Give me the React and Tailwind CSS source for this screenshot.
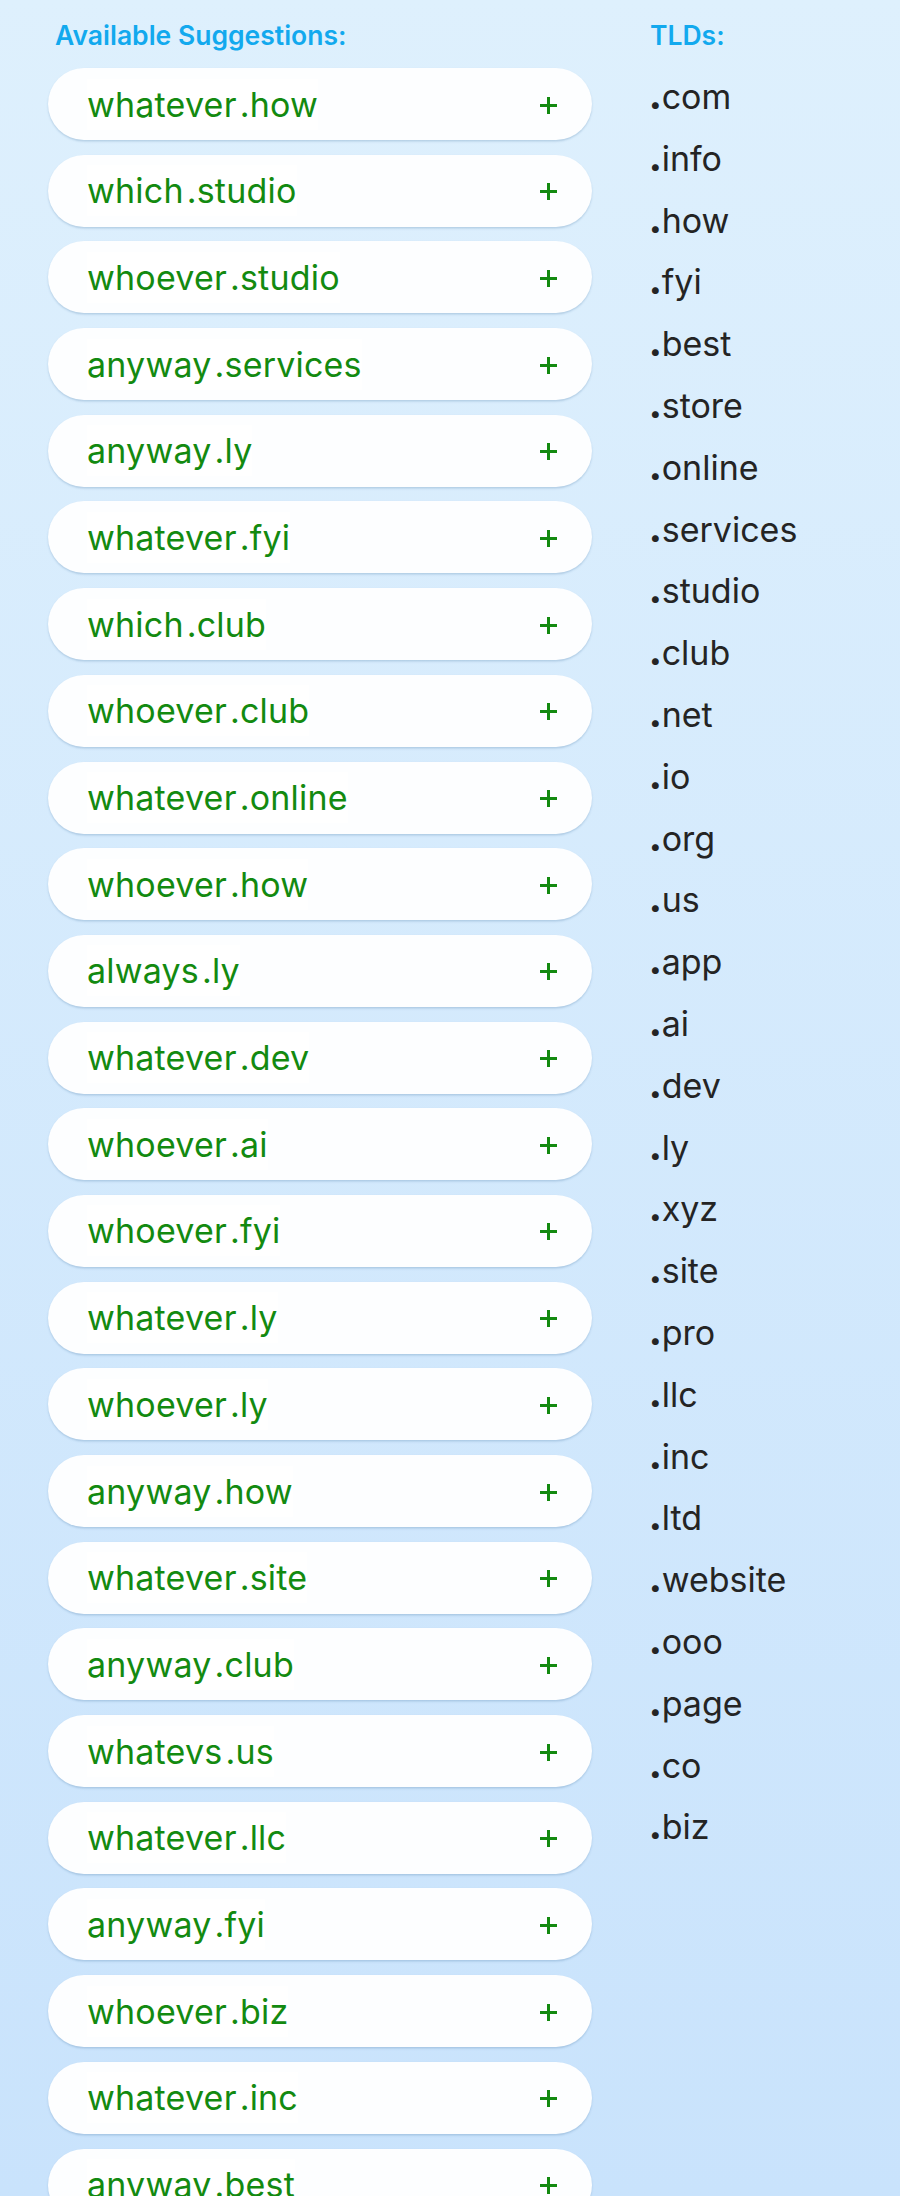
import React from "react"

var suggestions = [
  ['whatever', 'how'], ['which', 'studio'], ['whoever', 'studio'], ['anyway', 'services'], ['anyway', 'ly'],
  ['whatever', 'fyi'], ['which', 'club'], ['whoever', 'club'], ['whatever', 'online'], ['whoever', 'how'],
  ['always', 'ly'], ['whatever', 'dev'], ['whoever', 'ai'], ['whoever', 'fyi'], ['whatever', 'ly'],
  ['whoever', 'ly'], ['anyway', 'how'], ['whatever', 'site'], ['anyway', 'club'], ['whatevs', 'us'],
  ['whatever', 'llc'], ['anyway', 'fyi'], ['whoever', 'biz'], ['whatever', 'inc'], ['anyway', 'best'],
]

var tlds = ['com', 'info', 'how', 'fyi', 'best', 'store', 'online', 'services', 'studio', 'club', 'net', 'io', 'org', 'us', 'app', 'ai', 'dev', 'ly', 'xyz', 'site', 'pro', 'llc', 'inc', 'ltd', 'website', 'ooo', 'page', 'co', 'biz']

export default function App() {
  return (
    <div className="h-[2196px] overflow-hidden bg-gradient-to-b from-[#def0fd] to-[#c9e3fc] font-['Inter','Liberation_Sans',sans-serif]">
      <div className="flex pl-[48px] pt-[19px]">
        <div className="w-[544px]">
          <h2 className="pl-[7px] text-[26.5px] leading-[32px] font-semibold text-[#12a9ee] mb-[17px]">Available Suggestions:</h2>
          <div className="flex flex-col gap-[14.7px]">
            {suggestions.map((s, i) => (
              <div key={i} className="h-[72px] bg-[#fdfeff] rounded-full shadow-[0_1.5px_2px_rgba(60,110,160,0.25)] flex items-center justify-between pl-[39px] pr-[34px]">
                <span className="text-[34px] text-[#138a10] bg-white tracking-[0.2px]">{s[0]}<span className="ml-[3px]">.</span>{s[1]}</span>
                <svg width="19" height="19" viewBox="0 0 19 19" className="mt-[2px]"><path d="M9.5 1v17M1 9.5h17" stroke="#138a10" strokeWidth="3" /></svg>
              </div>
            ))}
          </div>
        </div>
        <div className="ml-[57px]">
          <h2 className="pl-[1px] text-[26.5px] leading-[32px] font-semibold text-[#12a9ee] mb-[15px]">TLDs:</h2>
          <ul className="flex flex-col">
            {tlds.map(t => (
              <li key={t} className="text-[34px] leading-[61.8px] text-[#242424]"><span className="font-black">.</span>{t}</li>
            ))}
          </ul>
        </div>
      </div>
    </div>
  )
}
